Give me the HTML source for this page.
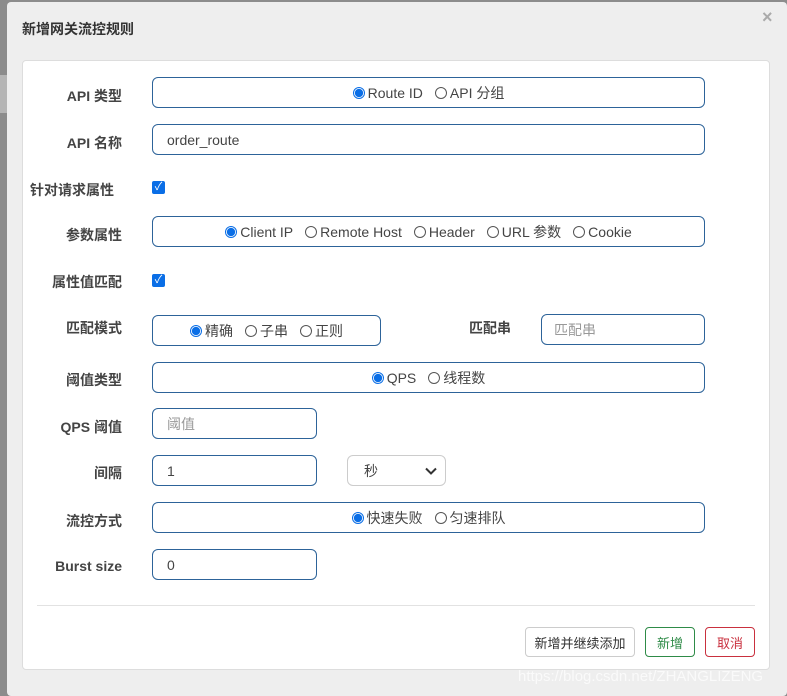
<!DOCTYPE html>
<html><head><meta charset="utf-8"><style>
body{margin:0;width:787px;height:696px;background:#8c8c8c;font-family:"Liberation Sans","Noto Sans CJK SC",sans-serif;position:relative;overflow:hidden}
.dlg{position:absolute;left:7px;top:2px;width:780px;height:694px;background:#eeeeee;border-radius:4px}
.title{position:absolute;left:22px;top:19px;font-size:14px;font-weight:bold;color:#333}
.x{position:absolute;left:762px;top:7px;font-size:18px;color:#aaa;font-weight:bold}
.panel{position:absolute;left:22px;top:60px;width:748px;height:610px;background:#fff;border:1px solid #ddd;border-radius:4px;box-sizing:border-box}
.lbl{position:absolute;font-size:14px;font-weight:bold;color:#444;text-align:right;width:100px;left:22px}
.box{position:absolute;left:152px;height:31px;border:1px solid #2d6399;border-radius:6px;box-sizing:border-box;font-size:14px;color:#444;display:flex;align-items:center}
.c{justify-content:center}
.r{display:inline-flex;align-items:center;margin:0 6px}
.rb{width:12px;height:12px;border:1px solid #555;border-radius:50%;display:inline-block;margin-right:3px;box-sizing:border-box}
.on{border:1px solid #0a6ee6;background:radial-gradient(#0a6ee6 55%,#fff 62%)}
.cb{position:absolute;left:152px;width:13px;height:13px;background:#0a6ee6;border-radius:2px;color:#fff;font-size:11px;line-height:13px;text-align:center}
.ph{color:#999}
.btn{position:absolute;top:627px;height:30px;border:1px solid;border-radius:4px;box-sizing:border-box;font-size:13px;display:flex;align-items:center;justify-content:center;background:#fff}
</style></head><body>
<div style="position:absolute;left:0;top:75px;width:7px;height:38px;background:#b5b5b5"></div>
<div class="dlg"></div>
<div class="title">新增网关流控规则</div>
<div class="x">×</div>
<div class="panel"></div>
<div class="lbl" style="top:86px">API 类型</div>
<div class="box c" style="top:77px;width:553px"><span class="r"><i class="rb on"></i>Route ID</span><span class="r"><i class="rb"></i>API 分组</span></div>
<div class="lbl" style="top:133px">API 名称</div>
<div class="box" style="top:124px;width:553px;padding-left:14px">order_route</div>
<div class="lbl" style="top:180px;left:30px;width:auto;text-align:left">针对请求属性</div>
<div class="cb" style="top:181px">✓</div>
<div class="lbl" style="top:225px">参数属性</div>
<div class="box c" style="top:216px;width:553px"><span class="r"><i class="rb on"></i>Client IP</span><span class="r"><i class="rb"></i>Remote Host</span><span class="r"><i class="rb"></i>Header</span><span class="r"><i class="rb"></i>URL 参数</span><span class="r"><i class="rb"></i>Cookie</span></div>
<div class="lbl" style="top:272px">属性值匹配</div>
<div class="cb" style="top:274px">✓</div>
<div class="lbl" style="top:318px">匹配模式</div>
<div class="box c" style="top:315px;width:229px"><span class="r"><i class="rb on"></i>精确</span><span class="r"><i class="rb"></i>子串</span><span class="r"><i class="rb"></i>正则</span></div>
<div class="lbl" style="top:318px;left:411px">匹配串</div>
<div class="box" style="top:314px;left:541px;width:164px;padding-left:12px"><span class="ph">匹配串</span></div>
<div class="lbl" style="top:370px">阈值类型</div>
<div class="box c" style="top:362px;width:553px"><span class="r"><i class="rb on"></i>QPS</span><span class="r"><i class="rb"></i>线程数</span></div>
<div class="lbl" style="top:417px">QPS 阈值</div>
<div class="box" style="top:408px;width:165px;padding-left:14px"><span class="ph">阈值</span></div>
<div class="lbl" style="top:463px">间隔</div>
<div class="box" style="top:455px;width:165px;padding-left:14px">1</div>
<div class="box" style="top:455px;left:347px;width:99px;border-color:#ccc;padding-left:16px;justify-content:space-between;padding-right:8px">秒<svg width="12" height="8" viewBox="0 0 12 8"><path d="M1 1.5L6 6.5L11 1.5" stroke="#333" stroke-width="2" fill="none"/></svg></div>
<div class="lbl" style="top:511px">流控方式</div>
<div class="box c" style="top:502px;width:553px"><span class="r"><i class="rb on"></i>快速失败</span><span class="r"><i class="rb"></i>匀速排队</span></div>
<div class="lbl" style="top:558px">Burst size</div>
<div class="box" style="top:549px;width:165px;padding-left:14px">0</div>
<div style="position:absolute;left:37px;top:605px;width:718px;height:1px;background:#e2e2e2"></div>
<div class="btn" style="left:525px;width:110px;border-color:#ccc;color:#333">新增并继续添加</div>
<div class="btn" style="left:645px;width:50px;border-color:#2e8b47;color:#2e8b47">新增</div>
<div class="btn" style="left:705px;width:50px;border-color:#c9303e;color:#c9303e">取消</div>
<div style="position:absolute;left:518px;top:668px;font-size:15px;color:rgba(255,255,255,.7)">https://blog.csdn.net/ZHANGLIZENG</div>
</body></html>
